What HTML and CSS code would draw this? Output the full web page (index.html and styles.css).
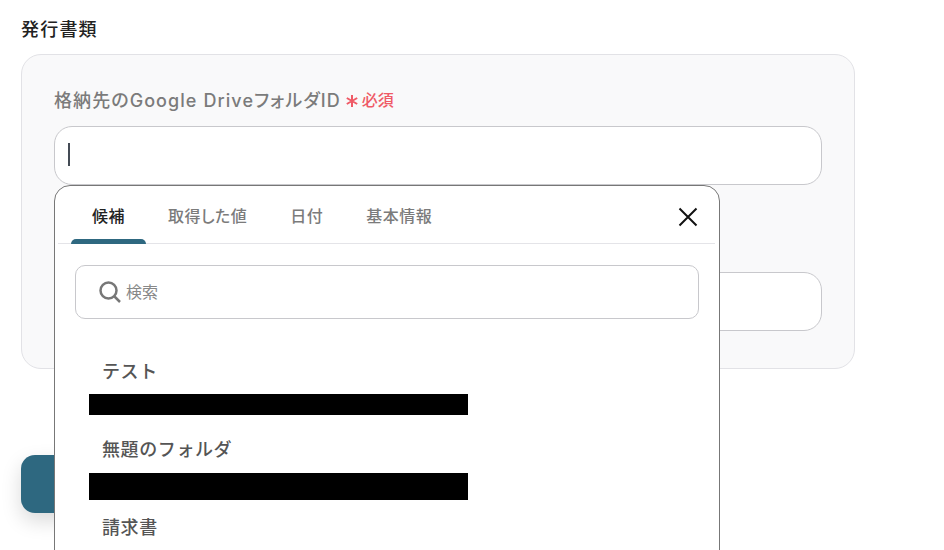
FILE: index.html
```html
<!DOCTYPE html>
<html lang="ja">
<head>
    <meta charset="UTF-8">
    <meta name="viewport" content="width=device-width, initial-scale=1.0">
    <title>発行書類</title>
    <link rel="stylesheet" href="styles.css">
</head>
<body>
    <div class="page">
        <h2 class="section-title">発行書類</h2>
        <div class="card">
            <div class="label-row">
                <span class="label">格納先のGoogle DriveフォルダID</span>
                <span class="required">
                    <svg class="star" viewBox="0 0 12 12" width="12" height="12">
                        <path d="M6 0 V12 M0.8 3 L11.2 9 M11.2 3 L0.8 9" fill="none" stroke="#ef5a66" stroke-width="2"/>
                    </svg>
                    必須
                </span>
            </div>
            <div class="field-wrap">
                <div class="input"><span class="caret"></span></div>
                <div class="popup">
                    <div class="tabs">
                        <div class="tab active">候補</div>
                        <div class="tab">取得した値</div>
                        <div class="tab">日付</div>
                        <div class="tab">基本情報</div>
                        <svg class="close" viewBox="0 0 20 20" width="20" height="20">
                            <path d="M1.5 1.5 L18.5 18.5 M18.5 1.5 L1.5 18.5" fill="none" stroke="#111" stroke-width="2"/>
                        </svg>
                    </div>
                    <div class="popup-body">
                        <div class="search">
                            <svg class="search-icon" viewBox="0 0 22 22" width="22" height="22">
                                <circle cx="9.5" cy="9.5" r="8" fill="none" stroke="#777" stroke-width="2.5"/>
                                <path d="M15.5 15.5 L21 21" fill="none" stroke="#777" stroke-width="2.5"/>
                            </svg>
                            <span class="search-text">検索</span>
                        </div>
                        <div class="option">
                            <div class="option-name">テスト</div>
                            <div class="redact redact-a"></div>
                        </div>
                        <div class="option">
                            <div class="option-name">無題のフォルダ</div>
                            <div class="redact redact-b"></div>
                        </div>
                        <div class="option">
                            <div class="option-name">請求書</div>
                        </div>
                    </div>
                </div>
            </div>
            <div class="input second"></div>
        </div>
        <div class="submit"></div>
    </div>
</body>
</html>
```

FILE: styles.css
```css
html, body {
    margin: 0;
    height: 550px;
    overflow: hidden;
    background: #fff;
}

body {
    font-family: Inter, "Noto Sans CJK JP", sans-serif;
    font-feature-settings: "palt";
}

.page {
    padding: 19px 0 0 21px;
}

.section-title {
    margin: 0;
    font-size: 18px;
    line-height: 22px;
    font-weight: 500;
    letter-spacing: 1.2px;
    color: #222;
}

.card {
    box-sizing: border-box;
    width: 834px;
    height: 315px;
    margin-top: 13px;
    padding: 30px 32px 0;
    background: #f9f9fa;
    border: 1px solid #e2e2e6;
    border-radius: 20px;
}

.label-row {
    display: flex;
    align-items: center;
    height: 28px;
    margin-bottom: 13px;
}

.label {
    font-size: 18px;
    font-weight: 500;
    letter-spacing: 1.07px;
    color: #7b7b7b;
}

.required {
    display: flex;
    align-items: center;
    margin-left: 5px;
    font-size: 16px;
    font-weight: 500;
    color: #ef5a66;
}

.star {
    margin: 3px 4px 0 0;
}

.field-wrap {
    position: relative;
}

.input {
    box-sizing: border-box;
    display: flex;
    align-items: center;
    height: 59px;
    padding: 0 0 2px 13px;
    background: #fff;
    border: 1px solid #c8c8cc;
    border-radius: 18px;
}

.second {
    margin-top: 87px;
}

.caret {
    width: 2px;
    height: 23px;
    background: #444b55;
}

.popup {
    position: absolute;
    top: 59px;
    left: 0;
    box-sizing: border-box;
    width: 666px;
    height: 420px;
    background: #fff;
    border: 1px solid #777;
    border-radius: 16px;
}

.tabs {
    position: relative;
    display: flex;
    gap: 1px;
    height: 57px;
    margin: 0 4px 0 3px;
    padding-left: 13px;
    border-bottom: 1px solid #e4e4e8;
}

.tab {
    position: relative;
    padding: 0 21px;
    line-height: 60px;
    font-size: 16px;
    font-weight: 500;
    letter-spacing: 0.5px;
    color: #7b7b7b;
}

.tab.active {
    color: #222;
}

.tab.active::after {
    content: "";
    position: absolute;
    left: 0;
    right: 0;
    bottom: -1px;
    height: 5px;
    background: #2e6880;
    border-radius: 5px 5px 0 0;
}

.close {
    position: absolute;
    top: 21px;
    right: 17px;
}

.popup-body {
    padding: 21px 20px 0;
}

.search {
    box-sizing: border-box;
    display: flex;
    align-items: center;
    height: 54px;
    padding-left: 23px;
    border: 1px solid #c8c8cc;
    border-radius: 10px;
}

.search-text {
    margin: -3px 0 0 5px;
    font-size: 16px;
    color: #888;
}

.option {
    margin-left: 14px;
}

.option-name {
    padding-left: 13px;
    font-size: 18px;
    line-height: 26px;
    font-weight: 500;
    font-feature-settings: normal;
    letter-spacing: 0.6px;
    color: #555;
}

.search + .option {
    margin-top: 40px;
}

.redact {
    width: 379px;
    background: #000;
}

.redact-a {
    height: 21px;
    margin: 9px 0 22px;
}

.redact-b {
    height: 27px;
    margin: 10px 0 15px;
}

.submit {
    width: 200px;
    height: 58px;
    margin-top: 86px;
    background: #2e6880;
    border-radius: 14px;
    box-shadow: 0 8px 20px rgba(0, 0, 0, 0.15);
}
```
